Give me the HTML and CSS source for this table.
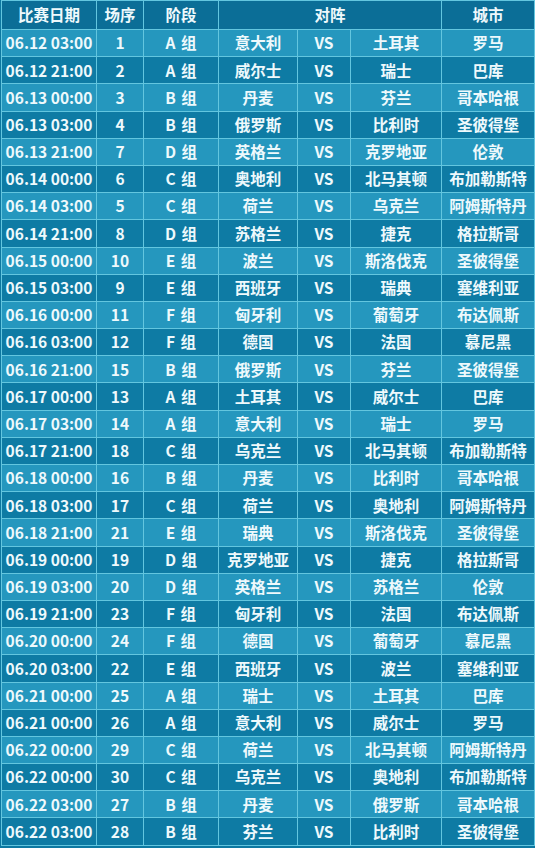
FILE: index.html
```html
<!DOCTYPE html>
<html lang="zh">
<head>
<meta charset="utf-8">
<link rel="stylesheet" href="styles.css">
</head>
<body>
<table class="sched">
<colgroup>
<col class="c-date"><col class="c-no"><col class="c-grp"><col class="c-t1"><col class="c-vs"><col class="c-t2"><col class="c-city">
</colgroup>
<thead>
<tr><th>比赛日期</th><th>场序</th><th>阶段</th><th colspan="3">对阵</th><th>城市</th></tr>
</thead>
<tbody>
<tr><td>06.12 03:00</td><td>1</td><td>A 组</td><td>意大利</td><td>VS</td><td>土耳其</td><td>罗马</td></tr>
<tr><td>06.12 21:00</td><td>2</td><td>A 组</td><td>威尔士</td><td>VS</td><td>瑞士</td><td>巴库</td></tr>
<tr><td>06.13 00:00</td><td>3</td><td>B 组</td><td>丹麦</td><td>VS</td><td>芬兰</td><td>哥本哈根</td></tr>
<tr><td>06.13 03:00</td><td>4</td><td>B 组</td><td>俄罗斯</td><td>VS</td><td>比利时</td><td>圣彼得堡</td></tr>
<tr><td>06.13 21:00</td><td>7</td><td>D 组</td><td>英格兰</td><td>VS</td><td>克罗地亚</td><td>伦敦</td></tr>
<tr><td>06.14 00:00</td><td>6</td><td>C 组</td><td>奥地利</td><td>VS</td><td>北马其顿</td><td>布加勒斯特</td></tr>
<tr><td>06.14 03:00</td><td>5</td><td>C 组</td><td>荷兰</td><td>VS</td><td>乌克兰</td><td>阿姆斯特丹</td></tr>
<tr><td>06.14 21:00</td><td>8</td><td>D 组</td><td>苏格兰</td><td>VS</td><td>捷克</td><td>格拉斯哥</td></tr>
<tr><td>06.15 00:00</td><td>10</td><td>E 组</td><td>波兰</td><td>VS</td><td>斯洛伐克</td><td>圣彼得堡</td></tr>
<tr><td>06.15 03:00</td><td>9</td><td>E 组</td><td>西班牙</td><td>VS</td><td>瑞典</td><td>塞维利亚</td></tr>
<tr><td>06.16 00:00</td><td>11</td><td>F 组</td><td>匈牙利</td><td>VS</td><td>葡萄牙</td><td>布达佩斯</td></tr>
<tr><td>06.16 03:00</td><td>12</td><td>F 组</td><td>德国</td><td>VS</td><td>法国</td><td>慕尼黑</td></tr>
<tr><td>06.16 21:00</td><td>15</td><td>B 组</td><td>俄罗斯</td><td>VS</td><td>芬兰</td><td>圣彼得堡</td></tr>
<tr><td>06.17 00:00</td><td>13</td><td>A 组</td><td>土耳其</td><td>VS</td><td>威尔士</td><td>巴库</td></tr>
<tr><td>06.17 03:00</td><td>14</td><td>A 组</td><td>意大利</td><td>VS</td><td>瑞士</td><td>罗马</td></tr>
<tr><td>06.17 21:00</td><td>18</td><td>C 组</td><td>乌克兰</td><td>VS</td><td>北马其顿</td><td>布加勒斯特</td></tr>
<tr><td>06.18 00:00</td><td>16</td><td>B 组</td><td>丹麦</td><td>VS</td><td>比利时</td><td>哥本哈根</td></tr>
<tr><td>06.18 03:00</td><td>17</td><td>C 组</td><td>荷兰</td><td>VS</td><td>奥地利</td><td>阿姆斯特丹</td></tr>
<tr><td>06.18 21:00</td><td>21</td><td>E 组</td><td>瑞典</td><td>VS</td><td>斯洛伐克</td><td>圣彼得堡</td></tr>
<tr><td>06.19 00:00</td><td>19</td><td>D 组</td><td>克罗地亚</td><td>VS</td><td>捷克</td><td>格拉斯哥</td></tr>
<tr><td>06.19 03:00</td><td>20</td><td>D 组</td><td>英格兰</td><td>VS</td><td>苏格兰</td><td>伦敦</td></tr>
<tr><td>06.19 21:00</td><td>23</td><td>F 组</td><td>匈牙利</td><td>VS</td><td>法国</td><td>布达佩斯</td></tr>
<tr><td>06.20 00:00</td><td>24</td><td>F 组</td><td>德国</td><td>VS</td><td>葡萄牙</td><td>慕尼黑</td></tr>
<tr><td>06.20 03:00</td><td>22</td><td>E 组</td><td>西班牙</td><td>VS</td><td>波兰</td><td>塞维利亚</td></tr>
<tr><td>06.21 00:00</td><td>25</td><td>A 组</td><td>瑞士</td><td>VS</td><td>土耳其</td><td>巴库</td></tr>
<tr><td>06.21 00:00</td><td>26</td><td>A 组</td><td>意大利</td><td>VS</td><td>威尔士</td><td>罗马</td></tr>
<tr><td>06.22 00:00</td><td>29</td><td>C 组</td><td>荷兰</td><td>VS</td><td>北马其顿</td><td>阿姆斯特丹</td></tr>
<tr><td>06.22 00:00</td><td>30</td><td>C 组</td><td>乌克兰</td><td>VS</td><td>奥地利</td><td>布加勒斯特</td></tr>
<tr><td>06.22 03:00</td><td>27</td><td>B 组</td><td>丹麦</td><td>VS</td><td>俄罗斯</td><td>哥本哈根</td></tr>
<tr><td>06.22 03:00</td><td>28</td><td>B 组</td><td>芬兰</td><td>VS</td><td>比利时</td><td>圣彼得堡</td></tr>
</tbody>
</table>
</body>
</html>
```
FILE: styles.css
```css
html, body {
  margin: 0;
  padding: 0;
  background: #0d78a1;
}
body {
  padding: 0 0 0 1px;
  font-family: "Noto Sans CJK SC", "Noto Sans", sans-serif;
  font-weight: 700;
  color: #eef9fc;
}
.sched {
  border-collapse: collapse;
  table-layout: fixed;
  width: 533px;
  font-size: 15.5px;
  word-spacing: 2px;
}
.c-date { width: 95px; }
.c-no { width: 47px; }
.c-grp { width: 75px; }
.c-t1 { width: 79px; }
.c-vs { width: 53px; }
.c-t2 { width: 91px; }
.c-city { width: 93px; }
.sched th, .sched td {
  border: 1px solid #63c6df;
  padding: 0;
  text-align: center;
  white-space: nowrap;
  line-height: 1;
}
.sched td:first-child {
  word-spacing: 0;
}
.sched thead tr {
  height: 29px;
  background: #0b6e97;
}
.sched tbody tr {
  height: 27.2px;
}
.sched tbody tr:nth-child(odd) {
  background: #2597be;
}
.sched tbody tr:nth-child(even) {
  background: #0e7ba4;
}
```
